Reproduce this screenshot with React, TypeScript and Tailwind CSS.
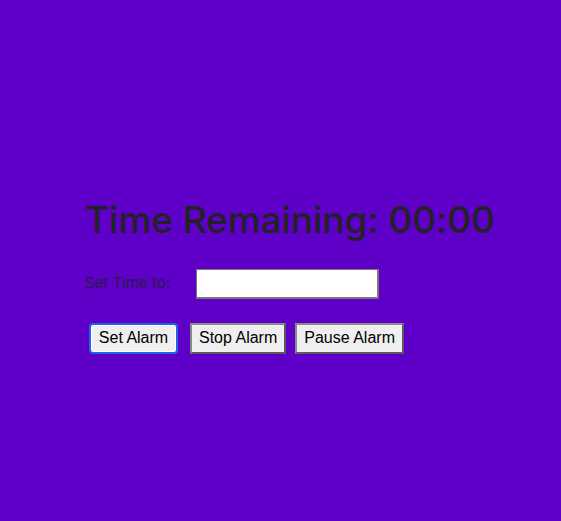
export default function App() {
  return (
    <div className="min-h-[521px] w-full bg-[#5f00c9] flex items-center" style={{ fontFamily: "Inter, sans-serif" }}>
      <div className="pl-[85px] pt-[28px] flex flex-col">
        <h1 className="text-[37px] leading-[48px] text-[#222226] font-medium tracking-[-0.05px]">
          Time Remaining: 00:00
        </h1>
        <div className="mt-[25px] flex items-center">
          <label className="text-[15px] text-[#2a1a48] w-[111px]">Set Time to:</label>
          <input
            type="text"
            className="w-[183px] h-[30px] bg-white border border-[#767676] border-b-2 border-r-2 outline-none"
          />
        </div>
        <div className="mt-[24px] flex items-center pl-[4px]" style={{ fontFamily: "'Liberation Sans', Arial, sans-serif" }}>
          <button className="w-[89px] h-[31px] text-[16px] text-black bg-[#efefef] border-2 border-[#1d63e3] rounded-[4px] shadow-[inset_0_0_0_1px_white]">
            Set Alarm
          </button>
          <button className="ml-[12px] h-[31px] px-[7px] text-[16px] text-black bg-[#efefef] border-2 border-[#5a5a5a] border-t-[#8a8a8a] border-l-[#8a8a8a]">
            Stop Alarm
          </button>
          <button className="ml-[9px] h-[31px] px-[7px] text-[16px] text-black bg-[#efefef] border-2 border-[#5a5a5a] border-t-[#8a8a8a] border-l-[#8a8a8a]">
            Pause Alarm
          </button>
        </div>
      </div>
    </div>
  );
}
